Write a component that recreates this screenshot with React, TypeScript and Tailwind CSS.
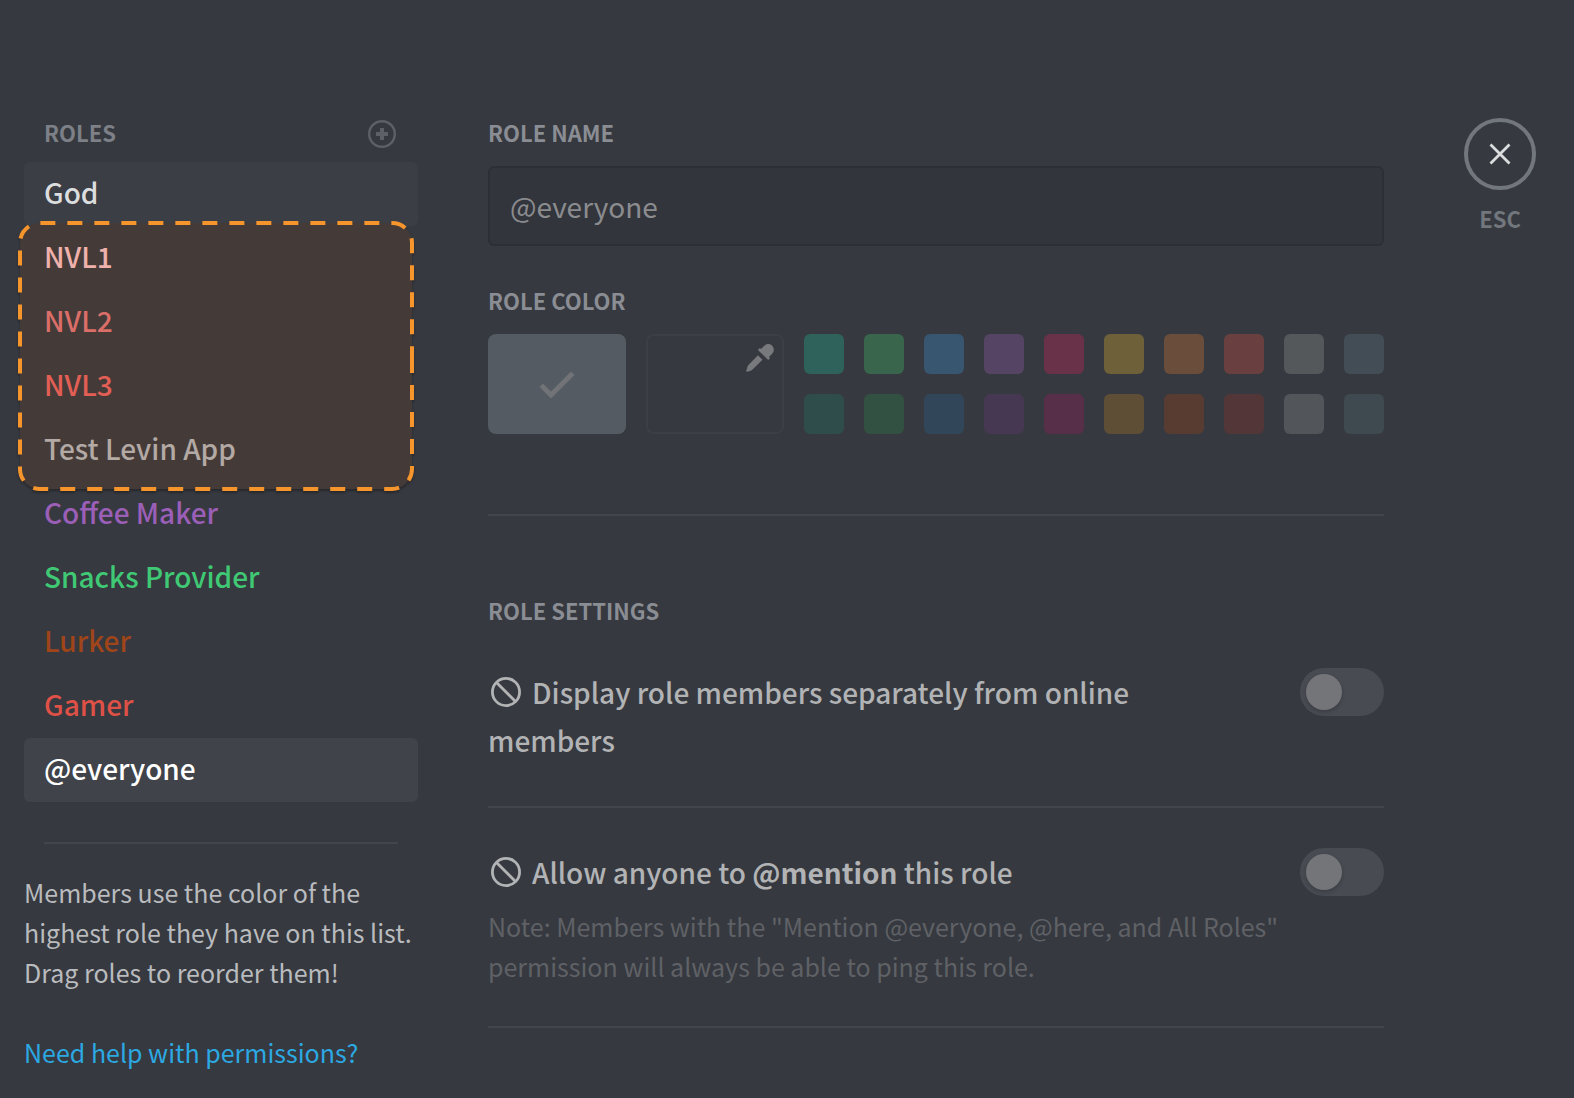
import type { ReactNode } from "react";

type Role = { name: string; tone: string };

const topRoles: Role[] = [{ name: "God", tone: "bg-[#3b3e45] text-[#dcddde]" }];

const highlightedRoles: Role[] = [
  { name: "NVL1", tone: "text-[#efb1ab]" },
  { name: "NVL2", tone: "text-[#db6e69]" },
  { name: "NVL3", tone: "text-[#e35f55]" },
  { name: "Test Levin App", tone: "text-[#b3a9a5]" },
];

const bottomRoles: Role[] = [
  { name: "Coffee Maker", tone: "text-[#9b5fb8]" },
  { name: "Snacks Provider", tone: "text-[#40c975]" },
  { name: "Lurker", tone: "text-[#9f4519]" },
  { name: "Gamer", tone: "text-[#df5147]" },
  { name: "@everyone", tone: "bg-[#40434a] text-white" },
];

const swatches = [
  { name: "Teal", tone: "bg-[#2f625b]" },
  { name: "Green", tone: "bg-[#39654c]" },
  { name: "Blue", tone: "bg-[#38566f]" },
  { name: "Purple", tone: "bg-[#554463]" },
  { name: "Pink", tone: "bg-[#6a3249]" },
  { name: "Yellow", tone: "bg-[#6e6139]" },
  { name: "Orange", tone: "bg-[#6a4e3b]" },
  { name: "Red", tone: "bg-[#69403f]" },
  { name: "Light grey", tone: "bg-[#54585b]" },
  { name: "Slate", tone: "bg-[#424d56]" },
  { name: "Dark teal", tone: "bg-[#2e4d4b]" },
  { name: "Dark green", tone: "bg-[#325143]" },
  { name: "Dark blue", tone: "bg-[#314658]" },
  { name: "Dark purple", tone: "bg-[#463753]" },
  { name: "Dark pink", tone: "bg-[#582f48]" },
  { name: "Dark yellow", tone: "bg-[#5f4e36]" },
  { name: "Dark orange", tone: "bg-[#583c32]" },
  { name: "Dark red", tone: "bg-[#533637]" },
  { name: "Grey", tone: "bg-[#525559]" },
  { name: "Dark slate", tone: "bg-[#3e4a50]" },
];

function RoleItem({ role }: { role: Role }) {
  return (
    <li>
      <button
        type="button"
        className={`block h-16 w-full rounded-md px-5 pb-1 text-left text-[28px] font-medium leading-[60px] ${role.tone}`}
      >
        {role.name}
      </button>
    </li>
  );
}

function SelectionOutline() {
  return (
    <svg
      aria-hidden="true"
      className="pointer-events-none absolute inset-0 size-full overflow-visible drop-shadow-[0_2px_1px_rgba(0,0,0,0.3)]"
    >
      <path
        d="M388 132V243A20 20 0 0 1 368 263H16A20 20 0 0 1 -4 243V17A20 20 0 0 1 16 -3H368A20 20 0 0 1 388 17V132Z"
        fill="#443b38"
        stroke="#f7952d"
        strokeWidth="4"
        strokeDasharray="15 12"
      />
    </svg>
  );
}

function BanIcon() {
  return (
    <svg aria-hidden="true" viewBox="0 0 36 36" className="mr-2 inline-block size-9 align-[-6px]" fill="none" stroke="#b2b3b5" strokeWidth="2.8">
      <circle cx="18" cy="18" r="13.6" />
      <path d="M8.500 8.500l19 19" />
    </svg>
  );
}

function SectionTitle({ children }: { children: ReactNode }) {
  return <span className="block pb-1 text-[22px] font-bold leading-7 text-[#8a8d93]">{children}</span>;
}

function Switch({ id }: { id: string }) {
  return (
    <input
      id={id}
      type="checkbox"
      role="switch"
      className="h-12 w-[84px] shrink-0 appearance-none rounded-full bg-[#484b52] p-[6px] before:block before:size-9 before:rounded-full before:bg-[#747578] before:shadow-[0_2px_4px_rgba(0,0,0,0.2)]"
    />
  );
}

export default function App() {
  return (
    <div className="flex min-h-screen bg-[#36393f] pt-[118px] font-['Noto_Sans_CJK_SC',sans-serif]">
      <aside className="w-[418px] shrink-0 pl-6">
        <div className="flex h-11 items-start justify-between pl-5 pr-[22px]">
          <h2 className="text-[22px] font-bold leading-7 text-[#7d8087]">ROLES</h2>
          <button type="button" aria-label="Add role" className="mt-[2px]">
            <svg aria-hidden="true" viewBox="0 0 28 28" className="size-7" fill="none" stroke="#5d6067">
              <circle cx="14" cy="14" r="12.8" strokeWidth="2.4" />
              <path d="M14 8v12M8 14h12" strokeWidth="4" />
            </svg>
          </button>
        </div>
        <ul>
          {topRoles.map((role) => (
            <RoleItem key={role.name} role={role} />
          ))}
        </ul>
        <div className="relative">
          <SelectionOutline />
          <ul className="relative">
            {highlightedRoles.map((role) => (
              <RoleItem key={role.name} role={role} />
            ))}
          </ul>
        </div>
        <ul>
          {bottomRoles.map((role) => (
            <RoleItem key={role.name} role={role} />
          ))}
        </ul>
        <hr className="mx-5 mt-10 border-t-2 border-[#42454c]" />
        <p className="mt-7 text-[25px] leading-10 text-[#b9bbbe]">
          Members use the color of the
          <br />
          highest role they have on this list.
          <br />
          Drag roles to reorder them!
        </p>
        <a href="#permissions" className="mt-10 block text-[25px] leading-10 text-[#2ca8e2]">
          Need help with permissions?
        </a>
      </aside>

      <main className="ml-[70px] min-w-0 flex-1">
        <label htmlFor="role-name">
          <SectionTitle>ROLE NAME</SectionTitle>
        </label>
        <input
          id="role-name"
          type="text"
          defaultValue="@everyone"
          className="mt-4 block h-20 w-full rounded-md border-2 border-[#2d2f36] bg-[#33353c] px-5 text-[28px] text-[#8b8c8f]"
        />

        <h2 className="mt-10">
          <SectionTitle>ROLE COLOR</SectionTitle>
        </h2>
        <div className="mt-4 flex gap-5">
          <div className="grid flex-1 grid-cols-2 gap-5">
            <button type="button" aria-label="Default color" className="flex h-[100px] items-center justify-center rounded-lg bg-[#545b63]">
              <svg aria-hidden="true" viewBox="0 0 36 28" className="h-7 w-9 overflow-visible" fill="#717376">
                <path d="M0.500 17L4 13.500L12 21.500L32 1.500L35.500 5L12 28.500Z" />
              </svg>
            </button>
            <button type="button" aria-label="Custom color" className="flex h-[100px] items-start justify-end rounded-lg border-2 border-[#3d3f46] p-2">
              <svg aria-hidden="true" viewBox="0 0 28 28" className="size-7" fill="#77797c">
                <path d="M18.300 1.800C20.500-.4 24-.5 26.200 1.700C28.400 4 28.300 7.500 26.200 9.700L23 12.900L24.100 14L22.300 15.900L11.900 6L13.800 4.100L15.100 5Z" />
                <path d="M12 11.300L16.500 15.800L6.300 25.700C5 26.900 3.200 26.900 2 27.600C.9 28.200-.2 27.100.4 26C1.100 24.700 1.100 22.500 2.400 21Z" />
              </svg>
            </button>
          </div>
          <div className="grid shrink-0 grid-cols-10 gap-5">
            {swatches.map((swatch) => (
              <button key={swatch.name} type="button" aria-label={swatch.name} className={`size-10 rounded-md ${swatch.tone}`} />
            ))}
          </div>
        </div>

        <hr className="mt-20 border-t-2 border-[#42454c]" />

        <h2 className="mt-20">
          <SectionTitle>ROLE SETTINGS</SectionTitle>
        </h2>
        <div className="mt-10 flex items-start justify-between gap-10 border-b-2 border-[#42454c] pb-[42px]">
          <label htmlFor="display-separately" className="max-w-[700px] text-[28px] font-medium leading-[48px] text-[#b2b3b5]">
            <BanIcon />
            Display role members separately from online members
          </label>
          <Switch id="display-separately" />
        </div>
        <div className="mt-10 border-b-2 border-[#42454c] pb-10">
          <div className="flex items-start justify-between">
            <label htmlFor="allow-mention" className="text-[28px] font-medium leading-[48px] text-[#b2b3b5]">
              <BanIcon />
              Allow anyone to <strong className="font-bold">@mention</strong> this role
            </label>
            <Switch id="allow-mention" />
          </div>
          <p className="mt-[10px] text-[25px] leading-10 text-[#5f6166]">
            Note: Members with the "Mention @everyone, @here, and All Roles"
            <br />
            permission will always be able to ping this role.
          </p>
        </div>
      </main>

      <div className="ml-20 mr-[38px] flex w-[72px] shrink-0 flex-col items-center">
        <button
          type="button"
          aria-label="Close"
          className="flex size-[72px] items-center justify-center rounded-full border-4 border-[#72767d]"
        >
          <svg aria-hidden="true" viewBox="0 0 22 22" className="size-[22px]" fill="none" stroke="#dcddde" strokeWidth="2.800">
            <path d="M1.500 1.500l19 19M20.500 1.500l-19 19" />
          </svg>
        </button>
        <span className="mt-3 text-[22px] font-bold leading-8 text-[#72767d]">ESC</span>
      </div>
    </div>
  );
}
